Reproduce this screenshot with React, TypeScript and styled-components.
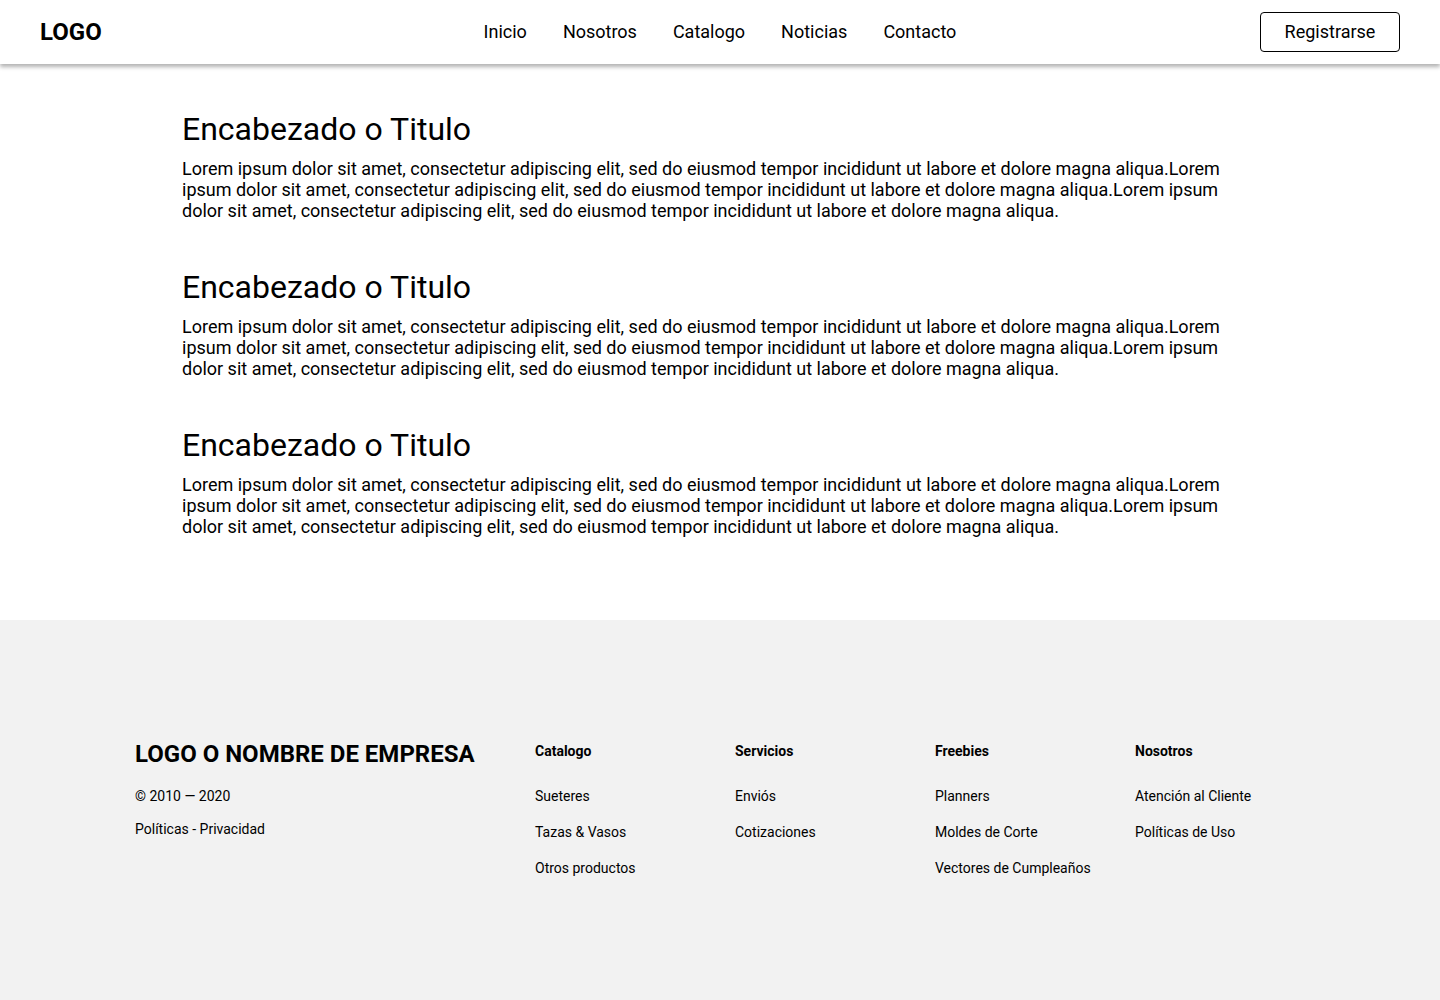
import React from "react";
import styled, { createGlobalStyle } from "styled-components";

const GlobalStyle = createGlobalStyle`
  * { box-sizing: border-box; }
  html, body { margin: 0; padding: 0; background: #ffffff; }
  body { font-family: Roboto, "Liberation Sans", Arial, sans-serif; color: #000; }
`;

const Page = styled.div`
  display: flex;
  flex-direction: column;
  min-height: 1000px;
`;

const Header = styled.header`
  position: relative;
  z-index: 2;
  height: 64px;
  padding: 0 40px;
  display: grid;
  grid-template-columns: 1fr auto 1fr;
  align-items: center;
  background: #fff;
  box-shadow: 0 3px 4px rgba(0, 0, 0, 0.3);
`;

const Logo = styled.div`
  font-size: 24px;
  font-weight: 700;
  line-height: 28px;
`;

const Nav = styled.nav`
  display: flex;
  gap: 36px;
  padding-bottom: 2px;
`;

const NavLink = styled.a`
  font-size: 18px;
  color: #000;
  text-decoration: none;
  line-height: 21px;
`;

const RegisterButton = styled.button`
  justify-self: end;
  width: 140px;
  height: 40px;
  padding: 0 0 1px;
  border: 1px solid #000;
  border-radius: 4px;
  background: #fff;
  font-family: inherit;
  font-size: 18px;
  color: #000;
`;

const Main = styled.main`
  width: 1076px;
  margin: 0 auto;
  padding: 46px 0 83px;
  display: flex;
  flex-direction: column;
  gap: 47px;
`;

const Section = styled.section`
  display: flex;
  flex-direction: column;
  gap: 10px;
`;

const Heading = styled.h2`
  margin: 0;
  font-size: 32px;
  font-weight: 400;
  line-height: 38px;
`;

const Paragraph = styled.p`
  margin: 0;
  font-size: 18px;
  line-height: 21px;
`;

const Footer = styled.footer`
  flex: 1;
  background: #f2f2f2;
  padding: 121px 0 0 135px;
  display: grid;
  grid-template-columns: 400px repeat(4, 200px);
  align-content: start;
`;

const Brand = styled.div`
  display: flex;
  flex-direction: column;
  margin-top: -1px;
`;

const BrandName = styled.div`
  font-size: 24px;
  font-weight: 700;
  line-height: 28px;
`;

const BrandLine = styled.div<{ $top: number }>`
  margin-top: ${(p) => p.$top}px;
  font-size: 14px;
  line-height: 17px;
`;

const Column = styled.div`
  display: flex;
  flex-direction: column;
  padding-top: 1.5px;
`;

const ColumnTitle = styled.div`
  font-size: 14px;
  font-weight: 700;
  line-height: 17px;
`;

const LinkList = styled.ul`
  list-style: none;
  margin: 28px 0 0;
  padding: 0;
  display: flex;
  flex-direction: column;
  gap: 19px;
`;

const LinkItem = styled.li`
  font-size: 14px;
  line-height: 17px;
`;

const lorem =
  "Lorem ipsum dolor sit amet, consectetur adipiscing elit, sed do eiusmod tempor incididunt ut labore et dolore magna aliqua.";

const columns = [
  { title: "Catalogo", links: ["Sueteres", "Tazas & Vasos", "Otros productos"] },
  { title: "Servicios", links: ["Envi\u00f3s", "Cotizaciones"] },
  { title: "Freebies", links: ["Planners", "Moldes de Corte", "Vectores de Cumpleaños"] },
  { title: "Nosotros", links: ["Atención al Cliente", "Políticas de Uso"] },
];

export default function App() {
  return (
    <Page>
      <GlobalStyle />
      <Header>
        <Logo>LOGO</Logo>
        <Nav>
          {["Inicio", "Nosotros", "Catalogo", "Noticias", "Contacto"].map((n) => (
            <NavLink key={n} href="#">
              {n}
            </NavLink>
          ))}
        </Nav>
        <RegisterButton>Registrarse</RegisterButton>
      </Header>
      <Main>
        {[0, 1, 2].map((i) => (
          <Section key={i}>
            <Heading>Encabezado o Titulo</Heading>
            <Paragraph>
              {lorem}
              {lorem}
              {lorem}
            </Paragraph>
          </Section>
        ))}
      </Main>
      <Footer>
        <Brand>
          <BrandName>LOGO O NOMBRE DE EMPRESA</BrandName>
          <BrandLine $top={20}>© 2010 — 2020</BrandLine>
          <BrandLine $top={16}>Políticas - Privacidad</BrandLine>
        </Brand>
        {columns.map((c) => (
          <Column key={c.title}>
            <ColumnTitle>{c.title}</ColumnTitle>
            <LinkList>
              {c.links.map((l) => (
                <LinkItem key={l}>{l}</LinkItem>
              ))}
            </LinkList>
          </Column>
        ))}
      </Footer>
    </Page>
  );
}
